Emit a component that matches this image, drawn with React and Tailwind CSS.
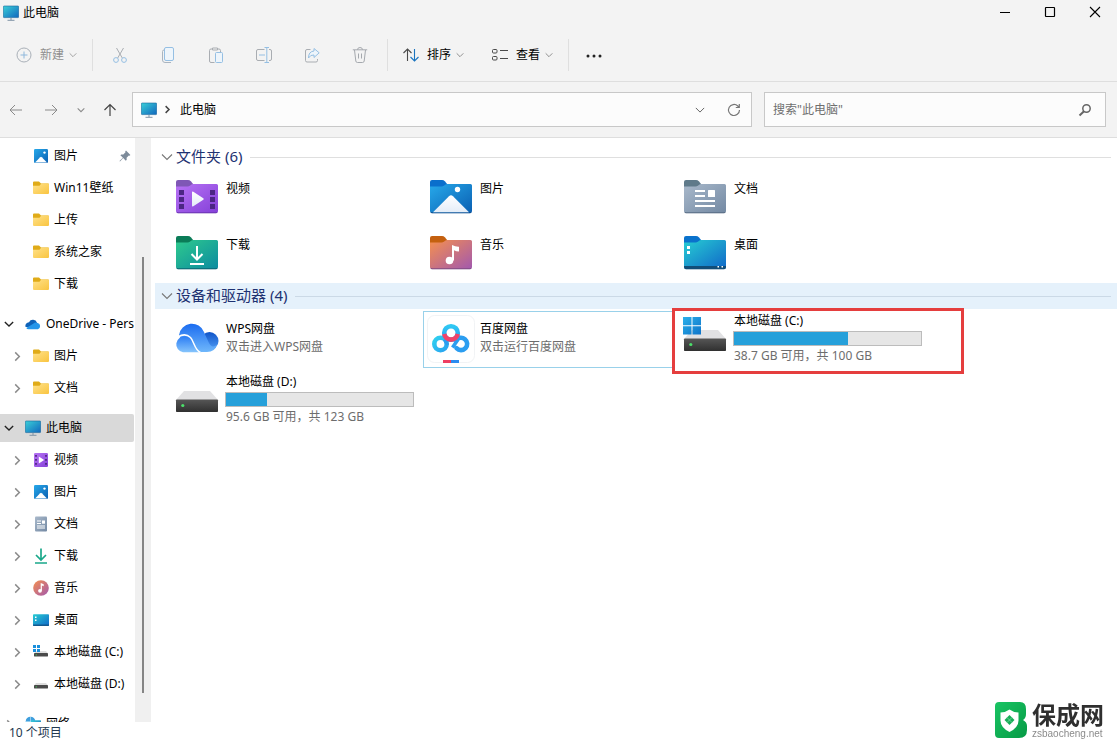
import { useState } from 'react';

function Gradient({ id, from, to, vertical }) {
  return (
    <linearGradient id={id} x1="0" y1="0" x2={vertical ? '0' : '1'} y2="1">
      <stop offset="0" stopColor={from} />
      <stop offset="1" stopColor={to} />
    </linearGradient>
  );
}

// Shared gradients for all of the icons
function IconDefs() {
  return (
    <svg width="0" height="0" className="absolute" aria-hidden="true">
      <defs>
        <Gradient id="g-monitor" from="#3ad0d8" to="#1166bd" />
        <Gradient id="g-video" from="#b873f5" to="#8440d8" />
        <Gradient id="g-picture" from="#27a9ea" to="#0a5fb2" />
        <Gradient id="g-doc" from="#a9b9cb" to="#7389a3" />
        <Gradient id="g-download" from="#2fca8d" to="#0b8ba0" />
        <Gradient id="g-music" from="#f5904f" to="#a258ae" />
        <Gradient id="g-desktop" from="#27cdd3" to="#1067c8" />
        <Gradient id="g-folder" from="#ffe28a" to="#f9c440" />
        <Gradient id="g-white" from="#ffffff" to="#e4edf8" vertical />
        <Gradient id="g-drive" from="#565656" to="#303030" vertical />
        <Gradient id="g-win" from="#2bb0ea" to="#0f74c9" />
        <Gradient id="g-wps" from="#1b6cf0" to="#6fb7fb" vertical />
        <Gradient id="g-wps-back" from="#1054c8" to="#4f9cf5" vertical />
        <Gradient id="g-wps-front" from="#2b7df4" to="#86c5fc" vertical />
        <Gradient id="g-baidu-top" from="#2fc8f3" to="#2a9bf0" vertical />
        <Gradient id="g-baidu-left" from="#2fd0ef" to="#2aa4f0" />
        <Gradient id="g-logo" from="#19c463" to="#069a45" />
      </defs>
    </svg>
  );
}

function MonitorIcon() {
  return (
    <svg viewBox="0 0 16 16" className="size-4 shrink-0">
      <rect x="0.3" y="1" width="15.4" height="11.6" rx="0.8" fill="url(#g-monitor)" stroke="#17659b" strokeWidth="0.6" />
      <path d="M8 13v2M4.5 15.3h7" stroke="#7f93a5" strokeWidth="1" />
    </svg>
  );
}

function FolderIcon() {
  return (
    <svg viewBox="0 0 16 16" className="size-4 shrink-0">
      <path d="M0 2.500a1 1 0 0 1 1-1h5l2 2h7a1 1 0 0 1 1 1v3H0z" fill="#e0ab18" />
      <path d="M0 5.700h6.500L8.300 3.500H15a1 1 0 0 1 1 1V13a1 1 0 0 1-1 1H1a1 1 0 0 1-1-1z" fill="url(#g-folder)" />
    </svg>
  );
}

function PictureIcon() {
  return (
    <svg viewBox="0 0 16 16" className="size-4 shrink-0">
      <rect x="1" y="1" width="14" height="14" rx="1.2" fill="url(#g-picture)" />
      <circle cx="11.5" cy="4.6" r="1.2" fill="#fff" />
      <path d="M2 14.6l5.2-5.4q.8-.7 1.6 0l5.2 5.4z" fill="#fff" />
    </svg>
  );
}

function VideoIcon() {
  return (
    <svg viewBox="0 0 16 16" className="size-4 shrink-0">
      <rect x="1" y="1" width="14" height="14" rx="1.2" fill="url(#g-video)" />
      <path d="M2.2 3h1.6v1.8H2.2zM2.2 7h1.6v1.8H2.2zM2.2 11h1.6v1.8H2.2zM12.2 3h1.6v1.8h-1.6zM12.2 7h1.6v1.8h-1.6zM12.2 11h1.6v1.8h-1.6z" fill="#432274" />
      <path d="M5.8 4.6v6.8L11.2 8z" fill="#fff" />
    </svg>
  );
}

function DocIcon() {
  return (
    <svg viewBox="0 0 16 16" className="size-4 shrink-0">
      <rect x="2" y="0.5" width="12" height="15" rx="1" fill="url(#g-doc)" />
      <path d="M4 5h4M4 7.5h4M4 10h8M4 12h8" stroke="#fff" strokeWidth="1.1" />
      <rect x="9" y="4.5" width="3" height="3.2" fill="#fff" />
    </svg>
  );
}

function DownloadIcon() {
  return (
    <svg viewBox="0 0 16 16" className="size-4 shrink-0" fill="none" stroke="#1aa88a" strokeWidth="1.7">
      <path d="M8 0.5v11M3 7l5 5 5-5M2 15h12" />
    </svg>
  );
}

function MusicIcon() {
  return (
    <svg viewBox="0 0 16 16" className="size-4 shrink-0">
      <circle cx="8" cy="8" r="7.8" fill="url(#g-music)" />
      <circle cx="7" cy="10.8" r="1.9" fill="#fff" />
      <path d="M7.7 3l3 1.2v2l-1.8-.6v5.2H7.7z" fill="#fff" />
    </svg>
  );
}

function DesktopIcon() {
  return (
    <svg viewBox="0 0 16 16" className="size-4 shrink-0">
      <rect x="0" y="2.3" width="16" height="11.6" rx="0.8" fill="url(#g-desktop)" />
      <path d="M2 4.5h1.5V6H2zM2 7.4h1.5v1.5H2z" fill="#fff" />
      <path d="M0 12.6h16v.6a.8.8 0 0 1-.8.8H.8a.8.8 0 0 1-.8-.8z" fill="#13598f" />
    </svg>
  );
}

function DriveIcon({ system }) {
  return (
    <svg viewBox="0 0 16 16" className="size-4 shrink-0">
      <path d="M3 7h10l2 2.5H1z" fill="#dedede" />
      <rect x="1" y="9" width="14" height="3.4" rx="0.4" fill="#4a4a4a" />
      <circle cx="3.2" cy="10.8" r="0.6" fill="#3edc5a" />
      {system && <path d="M0 1h3v3H0zM4 1h3v3H4zM0 5h3v3H0zM4 5h3v3H4z" fill="#1a8fdc" />}
    </svg>
  );
}

function OneDriveIcon() {
  return (
    <svg viewBox="0 0 16 16" className="size-4 shrink-0">
      <path d="M4 6.2a4.3 4.3 0 0 1 8 .6L8 11 .6 11A3.6 3.6 0 0 1 4 6.2z" fill="#0f62b8" />
      <path d="M1.2 12l7-4.2a4 4 0 0 1 4.5-.8 3.3 3.3 0 0 1 .2 6.3H3.5A3 3 0 0 1 1.2 12z" fill="#2596ea" />
    </svg>
  );
}

function NetworkIcon() {
  return (
    <svg viewBox="0 0 16 16" className="size-4 shrink-0">
      <circle cx="5.5" cy="5.5" r="4.8" fill="#3f9fdd" />
      <path d="M1 5.5h9M5.5 1v9" stroke="#a9dbf5" strokeWidth="0.8" />
      <rect x="6" y="4.2" width="10" height="8" rx="0.6" fill="url(#g-monitor)" />
    </svg>
  );
}

function PinIcon() {
  return (
    <svg viewBox="0 0 12 12" className="size-3 shrink-0" fill="#7d8b9a">
      <path d="M7 .6L11.4 5l-.9.8-.7-.2-2.2 2.2.1 2-.9.9-2.6-2.6L1 11.5l-.5-.5 3.4-3.2L1.4 5.3l.9-.9 2 .1 2.2-2.2-.3-.8z" />
    </svg>
  );
}

function Chevron({ dir = 'down', className = 'size-2', width = 1.2 }) {
  return (
    <svg viewBox="0 0 12 12" className={className} fill="none" stroke="currentColor" strokeWidth={width}>
      {dir === 'down' ? <path d="M1 3.5l5 5 5-5" /> : <path d="M3.5 1.5l4.5 4.5-4.5 4.5" />}
    </svg>
  );
}

// Large folder body, the children are drawn on top of it
function BigFolder({ fill, tab, edge, children }) {
  return (
    <svg viewBox="0 0 42 34" className="w-[42px] h-[34px] shrink-0">
      <path d="M0 2a2 2 0 0 1 2-2h10q1.700 0 2.800 1.200L17.500 4.500 14 8H0z" fill={tab} />
      <path d="M0 6.500h11.500q1.500 0 2.700-1.100T17 4h23.500A1.500 1.500 0 0 1 42 5.500V31a2 2 0 0 1-2 2H2a2 2 0 0 1-2-2z" fill={`url(#${fill})`} />
      <path d="M.4 31.800a2 2 0 0 0 1.600 1h38a2 2 0 0 0 1.600-1" fill="none" stroke={edge} strokeWidth="1" />
      {children}
    </svg>
  );
}

const folders = [
  {
    name: '视频',
    icon: (
      <BigFolder fill="g-video" tab="#7f57b5" edge="#6a35b0">
        <path d="M3 10h5v5H3zM3 17h5v5H3zM3 24h5v5H3zM34 10h5v5h-5zM34 17h5v5h-5zM34 24h5v5h-5z" fill="#4c2684" />
        <path d="M16 12.5v13q0 1.500 1.300.7l10-6.400q1-.8 0-1.600l-10-6.400q-1.300-.8-1.300.7z" fill="url(#g-white)" />
      </BigFolder>
    ),
  },
  {
    name: '图片',
    icon: (
      <BigFolder fill="g-picture" tab="#0a6fcc" edge="#0b4b8c">
        <circle cx="27.5" cy="9.5" r="2.7" fill="#fff" />
        <path d="M3 32.200L19 16.200q2-1.800 4 0l16 16z" fill="url(#g-white)" />
      </BigFolder>
    ),
  },
  {
    name: '文档',
    icon: (
      <BigFolder fill="g-doc" tab="#5f7a8a" edge="#566a82">
        <path d="M11 11h10M11 16h10M11 21h20M11 26h20" stroke="#fff" strokeWidth="2" />
        <rect x="24" y="10" width="7" height="7" rx="0.5" fill="#fff" />
      </BigFolder>
    ),
  },
  {
    name: '下载',
    icon: (
      <BigFolder fill="g-download" tab="#0b7c58" edge="#0a6271">
        <path d="M21 10v13M15.5 18l5.5 5.5 5.5-5.5M14 28h14" fill="none" stroke="#fff" strokeWidth="2" />
      </BigFolder>
    ),
  },
  {
    name: '音乐',
    icon: (
      <BigFolder fill="g-music" tab="#c4600f" edge="#7d4a80">
        <circle cx="19.5" cy="24.5" r="3.8" fill="#fff" />
        <path d="M22 9q3.500 2 7 1.800v4.700q-3 0-5-1.200v10.200h-2z" fill="#fff" />
      </BigFolder>
    ),
  },
  {
    name: '桌面',
    icon: (
      <BigFolder fill="g-desktop" tab="#0a72cc" edge="#0f4a75">
        <path d="M3 10h3v3H3zM3 15h3v3H3z" fill="#fff" />
        <path d="M0 30h42v1a2 2 0 0 1-2 2H2a2 2 0 0 1-2-2z" fill="#114d78" />
        <path d="M33.5 30H35v1.500h-1.500zM37.500 30H39v1.500h-1.500z" fill="#fff" />
      </BigFolder>
    ),
  },
];

function WpsIcon() {
  return (
    <svg viewBox="0 0 48 48" className="size-12 shrink-0">
      <circle cx="36.500" cy="26" r="9" fill="url(#g-wps-back)" />
      <path d="M6 20a13 13 0 0 1 25-3q3 7 5 11 3 6 8 1.500Q42 37 34 37H12z" fill="url(#g-wps)" />
      <path d="M10 37.300a7.800 7.800 0 1 1 2.500-15.800q6 .5 9 8.500 3 7 7 7.300z" fill="url(#g-wps-front)" />
      <path d="M5 22q7-4.500 12.500.5c3.500 3.500 4 12.500 10 15" fill="none" stroke="#fff" strokeWidth="1.5" />
    </svg>
  );
}

function BaiduIcon() {
  return (
    <svg viewBox="0 0 48 48" className="size-12 shrink-0">
      <rect x="0.5" y="0.5" width="47" height="47" rx="7" fill="#fff" stroke="#f1f3f5" />
      <circle cx="13.500" cy="29" r="6.2" fill="none" stroke="url(#g-baidu-left)" strokeWidth="4.6" />
      <path d="M29 25.200a6.200 6.200 0 1 1 .5 8" fill="none" stroke="#2b9df0" strokeWidth="4.6" strokeLinecap="round" />
      <path d="M17.500 24.500l3 5.500M31 24.500L25.500 32.500" stroke="#2b9df0" strokeWidth="3.5" />
      <circle cx="24" cy="18" r="6.8" fill="#fff" stroke="url(#g-baidu-top)" strokeWidth="4.6" />
      <path d="M17.300 19a6.800 6.800 0 0 0 13.400 0" fill="none" stroke="#f0436a" strokeWidth="4.6" />
      <path d="M16 45h8v3h-8z" fill="#ee3e62" />
      <path d="M24 45h8v3h-8z" fill="#2a8cf0" />
    </svg>
  );
}

function BigDriveIcon({ system }) {
  return (
    <svg viewBox="0 0 48 48" className="size-12 shrink-0">
      <path d="M11 15h26l8 9H3z" fill="#e1e1e3" />
      <rect x="3" y="23.5" width="42" height="12.5" rx="0.8" fill="url(#g-drive)" />
      <circle cx="9.8" cy="29.5" r="1.6" fill="#4be06a" />
      {system && <path d="M2 2h8.500v8.300H2zM11.500 2H20v8.300h-8.500zM2 11.200h8.500v8.300H2zM11.500 11.200H20v8.300h-8.500z" fill="url(#g-win)" />}
    </svg>
  );
}

const devices = [
  { name: 'WPS网盘', detail: '双击进入WPS网盘', icon: <WpsIcon /> },
  { name: '百度网盘', detail: '双击运行百度网盘', icon: <BaiduIcon />, focused: true },
  { name: '本地磁盘 (C:)', detail: '38.7 GB 可用，共 100 GB', icon: <BigDriveIcon system />, used: 61, marked: true },
  { name: '本地磁盘 (D:)', detail: '95.6 GB 可用，共 123 GB', icon: <BigDriveIcon />, used: 22 },
];

const tree = [
  [
    { name: '图片', icon: <PictureIcon />, level: 1, pinned: true },
    { name: 'Win11壁纸', icon: <FolderIcon />, level: 1 },
    { name: '上传', icon: <FolderIcon />, level: 1 },
    { name: '系统之家', icon: <FolderIcon />, level: 1 },
    { name: '下载', icon: <FolderIcon />, level: 1 },
  ],
  [
    { name: 'OneDrive - Pers', icon: <OneDriveIcon />, level: 0, arrow: 'down' },
    { name: '图片', icon: <FolderIcon />, level: 1, arrow: 'right' },
    { name: '文档', icon: <FolderIcon />, level: 1, arrow: 'right' },
  ],
  [
    { name: '此电脑', icon: <MonitorIcon />, level: 0, arrow: 'down', selected: true },
    { name: '视频', icon: <VideoIcon />, level: 1, arrow: 'right' },
    { name: '图片', icon: <PictureIcon />, level: 1, arrow: 'right' },
    { name: '文档', icon: <DocIcon />, level: 1, arrow: 'right' },
    { name: '下载', icon: <DownloadIcon />, level: 1, arrow: 'right' },
    { name: '音乐', icon: <MusicIcon />, level: 1, arrow: 'right' },
    { name: '桌面', icon: <DesktopIcon />, level: 1, arrow: 'right' },
    { name: '本地磁盘 (C:)', icon: <DriveIcon system />, level: 1, arrow: 'right' },
    { name: '本地磁盘 (D:)', icon: <DriveIcon />, level: 1, arrow: 'right' },
  ],
  [{ name: '网络', icon: <NetworkIcon />, level: 0, arrow: 'right' }],
];

function TitleBar() {
  return (
    <header className="flex items-center justify-between h-6 pl-[3px]">
      <div className="flex items-center gap-1 pt-px">
        <MonitorIcon />
        <h1>此电脑</h1>
      </div>
      <div className="flex h-full">
        <button aria-label="最小化" className="flex items-center justify-center w-[45px]">
          <svg viewBox="0 0 12 12" className="size-3" stroke="#000"><path d="M1 6.5h10" /></svg>
        </button>
        <button aria-label="最大化" className="flex items-center justify-center w-[45px]">
          <svg viewBox="0 0 12 12" className="size-3" fill="none" stroke="#000" strokeWidth="1.2"><rect x="1.5" y="1.5" width="9" height="9" rx="0.5" /></svg>
        </button>
        <button aria-label="关闭" className="flex items-center justify-center w-[45px]">
          <svg viewBox="0 0 12 12" className="size-3" stroke="#000" strokeWidth="1.1"><path d="M1 1l10 10M11 1L1 11" /></svg>
        </button>
      </div>
    </header>
  );
}

const editActions = [
  {
    label: '剪切',
    icon: (
      <>
        <path d="M4.5 1l5.8 10M11.5 1L5.7 11" stroke="#a9adb2" />
        <circle cx="4" cy="13" r="2.4" />
        <circle cx="12" cy="13" r="2.4" />
      </>
    ),
  },
  {
    label: '复制',
    icon: (
      <>
        <path d="M4 3q-1.500 0-1.500 1.500V13q0 2.500 2.500 2.500h6" stroke="#a9b4c0" />
        <rect x="4.5" y="0.5" width="9" height="13" rx="1.5" fill="#eef5fb" />
      </>
    ),
  },
  {
    label: '粘贴',
    icon: (
      <>
        <path d="M6.5 15.500H3q-1.500 0-1.500-1.500V3.500Q1.500 2 3 2h1.500M9.500 2H11q1.500 0 1.500 1.500V5M4.500 1h5v2h-5z" stroke="#a9adb2" />
        <rect x="7.5" y="5.5" width="7" height="10" rx="1" fill="#eef5fb" />
      </>
    ),
  },
  {
    label: '重命名',
    icon: (
      <>
        <path d="M8.5 2.500H2Q.5 2.500.5 4v8q0 1.500 1.500 1.500h6.500M13 2.500h1q1.500 0 1.500 1.500v8q0 1.500-1.500 1.500h-1" stroke="#a9adb2" />
        <path d="M3 8h6M10.8 1v14M8.5.5H13M8.5 15.500H13" />
      </>
    ),
  },
  {
    label: '共享',
    icon: (
      <>
        <path d="M6.5 2.500H3Q1.500 2.500 1.500 4v9.500Q1.500 15 3 15h9q1.500 0 1.500-1.500V12" stroke="#a9adb2" />
        <path d="M10 1.500l5.200 4.300L10 10.500V8Q6.500 7.500 4.500 11q0-6.500 5.500-7z" fill="#eef5fb" />
      </>
    ),
  },
  {
    label: '删除',
    icon: <path d="M.8 2.800h14.400M5.500 2.800q0-2.300 2.500-2.300t2.500 2.300M2.500 3l1.300 11q.2 1.500 1.700 1.500h5q1.500 0 1.700-1.500L13.500 3M6.500 6.500v5M9.500 6.500v5" stroke="#a5a9ae" />,
  },
];

function Divider() {
  return <div className="w-px h-8 mx-[3px] bg-[#dfdfdf]" />;
}

function Toolbar() {
  return (
    <div className="flex items-center h-[58px] pl-1 pb-1 pt-2 border-b border-[#dedede]">
      <button className="flex items-center px-3 text-[#8f8f8f]">
        <svg viewBox="0 0 16 16" className="size-4 mr-2" fill="none">
          <circle cx="8" cy="8" r="7" stroke="#a9b0b8" />
          <path d="M8 4.500v7M4.500 8h7" stroke="#8fb8dc" />
        </svg>
        新建
        <Chevron className="size-2 ml-[5px]" />
      </button>
      <Divider />
      {editActions.map((action) => (
        <button key={action.label} aria-label={action.label} className="flex items-center justify-center w-12 h-10">
          <svg viewBox="0 0 16 16" className="size-4" fill="none" stroke="#95bfe3">{action.icon}</svg>
        </button>
      ))}
      <Divider />
      <div className="flex gap-1">
        <button className="flex items-center px-3">
          <svg viewBox="0 0 16 16" className="size-4 mr-2" fill="none" strokeWidth="1.1">
            <path d="M4.5 14V2M.5 6l4-4 4 4" stroke="#4a4a4a" />
            <path d="M11.5 2v12M7.500 10l4 4 4-4" stroke="#1a74bf" />
          </svg>
          排序
          <Chevron className="size-2 ml-[5px] text-[#777]" />
        </button>
        <button className="flex items-center px-3">
          <svg viewBox="0 0 16 16" className="size-4 mr-2" fill="none" stroke="#4a4a4a">
            <rect x="0.5" y="2.5" width="4.5" height="3.5" rx="1" />
            <rect x="0.5" y="9.5" width="4.5" height="3.5" rx="1" />
            <path d="M8 3.500h8M8 11.500h8" />
          </svg>
          查看
          <Chevron className="size-2 ml-[5px] text-[#777]" />
        </button>
      </div>
      <Divider />
      <button aria-label="查看更多" className="px-3">
        <svg viewBox="0 0 18 16" className="w-[18px] h-4" fill="#222">
          <circle cx="4" cy="9" r="1.5" />
          <circle cx="10" cy="9" r="1.5" />
          <circle cx="16" cy="9" r="1.5" />
        </svg>
      </button>
    </div>
  );
}

function AddressRow() {
  const [query, setQuery] = useState('');

  return (
    <div className="flex items-center h-14 pr-[11px] border-b border-[#dedede]">
      <nav aria-label="导航" className="flex items-center w-[132px] shrink-0 pl-2">
        <button aria-label="后退" className="w-4 mr-[19px] text-[#8a8a8a]">
          <svg viewBox="0 0 16 16" className="size-4" fill="none" stroke="currentColor"><path d="M14 8H2.500M7 3L2 8l5 5" /></svg>
        </button>
        <button aria-label="前进" className="w-4 mr-[18px] text-[#8a8a8a]">
          <svg viewBox="0 0 16 16" className="size-4" fill="none" stroke="currentColor"><path d="M2 8h11.500M9 3l5 5-5 5" /></svg>
        </button>
        <button aria-label="最近位置" className="w-2 mr-[17px] text-[#8a8a8a]">
          <Chevron width={1.6} />
        </button>
        <button aria-label="向上" className="w-4 text-[#444]">
          <svg viewBox="0 0 16 16" className="size-4" fill="none" stroke="currentColor" strokeWidth="1.2"><path d="M8 14V2.500M2.500 8L8 2.500 13.500 8" /></svg>
        </button>
      </nav>
      <div className="flex items-center flex-1 min-w-0 h-[35px] mr-3 px-2 bg-[#fcfcfc] border border-[#c8c8c8]">
        <MonitorIcon />
        <Chevron dir="right" className="size-[9px] ml-[6px] mr-[8px] text-[#444]" width={2} />
        <a href="#this-pc" className="flex-1">此电脑</a>
        <button aria-label="以前的位置" className="mr-[22px] text-[#666]"><Chevron className="size-[10px]" /></button>
        <button aria-label="刷新" className="mr-[2px]">
          <svg viewBox="0 0 14 14" className="size-[14px]" fill="none" stroke="#777" strokeWidth="1.2">
            <path d="M12.500 7A5.500 5.500 0 1 1 10.800 3l1.200 1.300M12.300 1v3.500H8.800" />
          </svg>
        </button>
      </div>
      <label className="flex items-center w-[342px] h-[35px] pl-2 pr-[13px] bg-[#fcfcfc] border border-[#c8c8c8]">
        <input
          value={query}
          onChange={(e) => setQuery(e.target.value)}
          placeholder={'搜索"此电脑"'}
          aria-label="搜索"
          className="flex-1 min-w-0 bg-transparent outline-none placeholder:text-[#6f6f6f]"
        />
        <svg viewBox="0 0 14 14" className="size-[14px]" fill="none" stroke="#666" strokeWidth="1.5">
          <circle cx="8.5" cy="5.5" r="3.7" />
          <path d="M6 8.200L1.500 12.500" strokeWidth="2" />
        </svg>
      </label>
    </div>
  );
}

function TreeItem({ item }) {
  return (
    <li className="py-[2px]">
      <a
        href="#"
        className={`flex items-center h-7 rounded-r-xs ${item.level ? 'pl-3' : 'pl-1'} ${item.selected ? 'bg-[#d9d9d9]' : ''}`}
      >
        <span className={`w-3 mr-[9px] shrink-0 ${item.arrow === 'down' ? 'text-[#222]' : 'text-[#8a8a8a]'}`}>
          {item.arrow && <Chevron dir={item.arrow} className={item.arrow === 'down' ? 'size-[10px]' : 'size-[11px]'} width={1.6} />}
        </span>
        {item.icon}
        <span className="ml-[5px] flex-1 whitespace-nowrap">{item.name}</span>
        {item.pinned && <span className="mr-[3px]"><PinIcon /></span>}
      </a>
    </li>
  );
}

function Sidebar() {
  return (
    <aside className="flex shrink-0 overflow-hidden">
      <nav aria-label="文件夹树" className="flex flex-col gap-2 w-[134px] pt-[2px] mr-px">
        {tree.map((group, i) => (
          <ul key={i}>
            {group.map((item) => (
              <TreeItem key={item.name} item={item} />
            ))}
          </ul>
        ))}
      </nav>
      <div className="flex flex-col items-center w-4 bg-[#f0f0f0] pt-[119px] pb-[29px]">
        <div className="w-[2px] flex-1 bg-[#858585]" />
      </div>
    </aside>
  );
}

function GroupHeader({ title, highlighted }) {
  return (
    <h2 className={`flex items-center h-[26px] px-[6px] text-[15px] text-[#1e3272] ${highlighted ? 'bg-[#e5f1fb]' : ''}`}>
      <Chevron className="size-3 mr-[3px] text-[#777]" width={1.1} />
      <span className="pb-[2px]">{title}</span>
      <span className={`flex-1 h-px ml-2 ${highlighted ? 'bg-[#cbd9e6]' : 'bg-[#dfdfdf]'}`} />
    </h2>
  );
}

function UsageBar({ name, used }) {
  return (
    <div role="progressbar" aria-label={name} aria-valuenow={used} className="w-[189px] h-[15px] my-px bg-[#e6e6e6] border border-[#bcbcbc]">
      <div className="h-full bg-[#26a0da]" style={{ width: `${used}%` }} />
    </div>
  );
}

function DeviceTile({ device }) {
  return (
    <li className={`relative h-[57px] pl-[3px] border ${device.focused ? 'border-[#99d1ea]' : 'border-transparent'}`}>
      {device.marked && <div className="absolute -left-[6px] -top-[4px] w-[292px] h-[66px] bg-white border-3 border-[#e53e3e]" />}
      <div className="relative flex gap-1">
        <div className="pt-[3px]">{device.icon}</div>
        <div className={`leading-[18px] whitespace-nowrap ${device.used ? '' : 'pt-2'}`}>
          <p className="pl-px">{device.name}</p>
          {device.used && <UsageBar name={device.name} used={device.used} />}
          <p className="pl-px text-[#6d6d6d]">{device.detail}</p>
        </div>
      </div>
    </li>
  );
}

function Watermark() {
  return (
    <div className="fixed right-[13px] bottom-[5px] flex items-center gap-[5px]">
      <svg viewBox="0 0 32 36" className="w-8 h-9">
        <path d="M4 0h21q6 0 6 7v5q0 4-3 6 4 2 4 6v4q0 8-8 8H4q-4 0-4-4V4q0-4 4-4z" fill="url(#g-logo)" />
        <path d="M14.5 7.500q4 3 9 3v8q0 7-9 11.500-9-4.500-9-11.500v-8q5 0 9-3z" fill="#fff" />
        <path d="M14.5 13l5 5-5 5-5-5z" fill="#16ad57" />
        <path d="M12 15.500l5 5M17 15.500l-5 5" stroke="#7fd8a4" strokeWidth="0.8" />
      </svg>
      <div className="text-[#2f2f2f]">
        <p className="text-2xl font-bold leading-7">保成网</p>
        <p className="text-[10px] leading-[10px] text-[#8b8b8b] font-['Liberation_Sans',sans-serif]">zsbaocheng.net</p>
      </div>
    </div>
  );
}

export default function App() {
  return (
    <div className="flex flex-col h-screen overflow-hidden bg-white text-xs text-black font-['Noto_Sans','Noto_Sans_CJK_SC',sans-serif]">
      <IconDefs />
      <div className="shrink-0 bg-[#f3f3f3]">
        <TitleBar />
        <Toolbar />
        <AddressRow />
      </div>
      <div className="flex flex-1 min-h-0">
        <Sidebar />
        <main className="flex-1 min-w-0 pl-1 pt-[6px]">
          <section>
            <GroupHeader title="文件夹 (6)" />
            <ul className="grid grid-cols-[repeat(auto-fill,254px)] pl-[14px] mb-px">
              {folders.map((folder) => (
                <li key={folder.name} className="flex items-start gap-2 h-14 pl-[7px] pt-[10px]">
                  {folder.icon}
                  <span className="leading-[18px]">{folder.name}</span>
                </li>
              ))}
            </ul>
          </section>
          <section>
            <GroupHeader title="设备和驱动器 (4)" highlighted />
            <ul className="grid grid-cols-[repeat(auto-fill,254px)] gap-y-1 pl-[14px] pt-[2px]">
              {devices.map((device) => (
                <DeviceTile key={device.name} device={device} />
              ))}
            </ul>
          </section>
        </main>
      </div>
      <footer className="flex items-center h-[22px] shrink-0 pl-[9px] text-[#22384f]">10 个项目</footer>
      <Watermark />
    </div>
  );
}
